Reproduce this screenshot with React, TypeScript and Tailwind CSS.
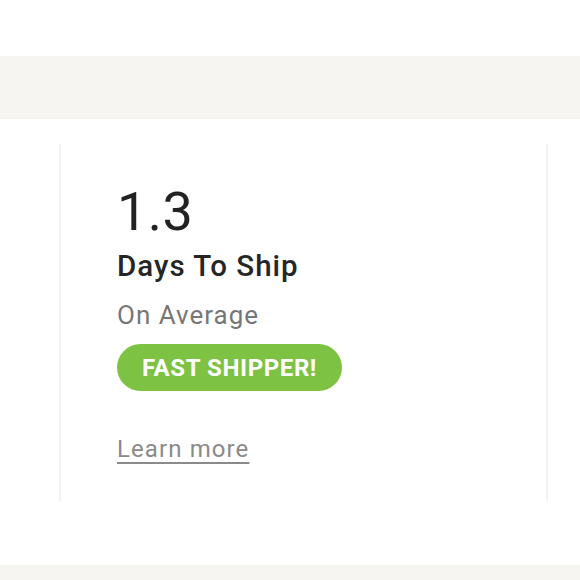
import React from 'react';

const App: React.FC = () => {
  return (
    <div
      className="w-[580px] h-[580px] bg-white flex flex-col overflow-hidden"
      style={{ fontFamily: 'Roboto, "Liberation Sans", sans-serif' }}
    >
      <div className="h-[56px] bg-white" />
      <div className="h-[63px] bg-[#f6f5f2]" />
      <div className="h-[446px] bg-white pt-[25px]">
        {/* Card */}
        <div className="ml-[59px] w-[489px] h-[357px] border-x-2 border-[#f2f2f2] pl-[56px] pt-[38px]">
          <div className="text-[54px] leading-[60px] tracking-[0.5px] text-[#222] font-normal">1.3</div>
          <div className="text-[29.5px] leading-[36px] tracking-[1px] font-medium text-[#262626] mt-[6px]">Days To Ship</div>
          <div className="text-[26px] leading-[32px] tracking-[1px] text-[#777] mt-[15px]">On Average</div>
          <div className="mt-[13px] inline-flex items-center h-[47px] px-[25px] rounded-full bg-[#7dc243] text-white text-[24px] tracking-[0.6px] font-bold">
            FAST SHIPPER!
          </div>
          <div className="mt-[43px]">
            <a className="text-[24px] leading-[30px] tracking-[1.1px] text-[#8a8a8a] underline decoration-2 underline-offset-[5px]">Learn more</a>
          </div>
        </div>
      </div>
      <div className="flex-1 bg-[#f6f5f2]" />
    </div>
  );
};

export default App;
